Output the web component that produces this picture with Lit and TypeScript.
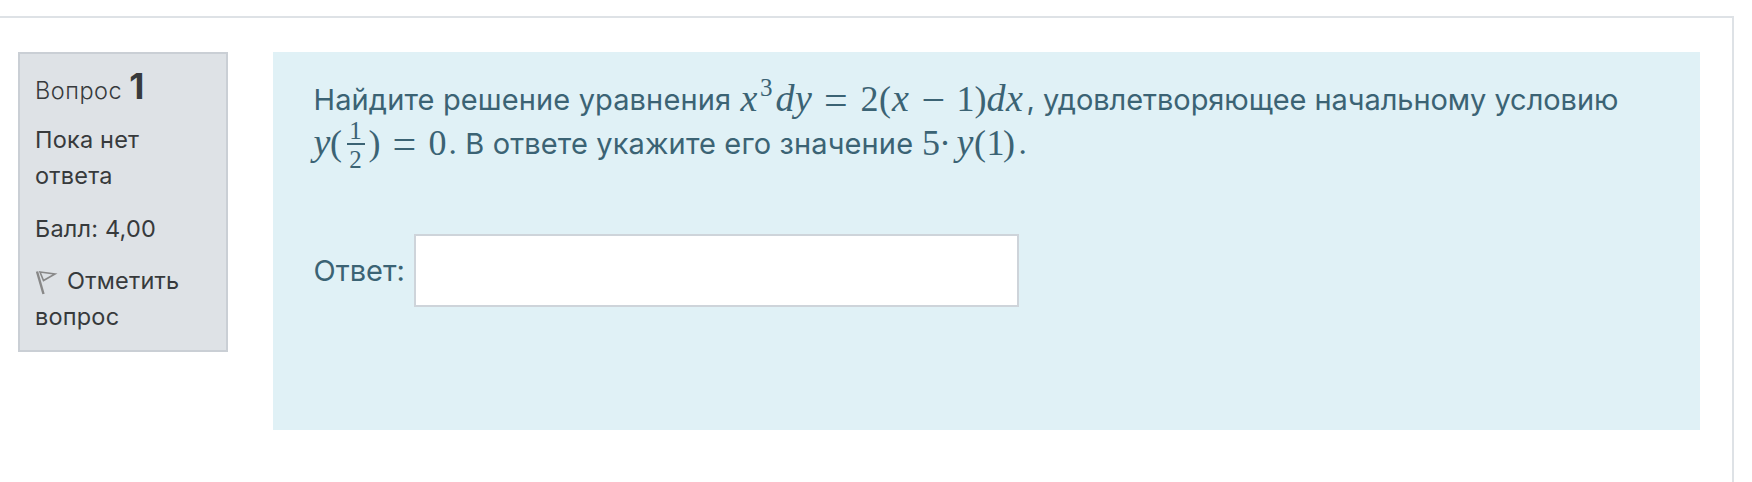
import { LitElement, html, css } from "lit";
import { customElement, property } from "lit/decorators.js";
import { styleMap } from "lit/directives/style-map.js";

type Kind = "i" | "n" | "op" | "sup" | "frac";
type Token = [text: string, kind: Kind, advance: number];

const EQUATION: Token[] = [
  ["x", "i", 19.5],
  ["3", "sup", 15.5],
  ["d", "i", 19.5],
  ["y", "i", 29],
  ["=", "op", 36.5],
  ["2", "n", 18.5],
  ["(", "n", 13],
  ["x", "i", 29.5],
  ["−", "op", 35],
  ["1", "n", 18],
  [")", "n", 12],
  ["d", "i", 19.5],
  ["x", "i", 20.5],
];

const CONDITION: Token[] = [
  ["y", "i", 16.5],
  ["(", "n", 16.5],
  ["1/2", "frac", 22],
  [")", "n", 24],
  ["=", "op", 36],
  ["0", "n", 20],
];

const VALUE: Token[] = [
  ["5", "n", 17],
  ["·", "n", 17.5],
  ["y", "i", 17.5],
  ["(", "n", 12.5],
  ["1", "n", 16.5],
  [")", "n", 15.5],
];

@customElement("math-run")
class MathRun extends LitElement {
  @property({ attribute: false }) tokens: Token[] = [];

  static styles = css`
    :host {
      display: inline;
      font-family: "Liberation Serif", serif;
      font-size: 36px;
      line-height: 1px;
      letter-spacing: 0;
    }
    .t { display: inline-block; text-align: left; vertical-align: -1px; }
    .i { font-style: italic; font-size: 38px; }
    .op { font-size: 42px; vertical-align: -4px; }
    .sup { font-size: 25px; vertical-align: 14px; }
    .frac {
      display: inline-flex;
      flex-direction: column;
      font-size: 25px;
      vertical-align: 15px;
      margin: -14px 0 -14px;
    }
    .frac span { width: 18px; line-height: 24px; text-align: center; }
    .frac span + span { border-top: 2px solid; padding-top: 3px; }
  `;

  render() {
    return this.tokens.map(([text, kind, advance]) => {
      const width = styleMap({ width: `${advance}px` });
      if (kind === "frac") {
        const parts = text.split("/");
        return html`<span class="t frac" style=${width}>${parts.map((p) => html`<span>${p}</span>`)}</span>`;
      }
      return html`<span class="t ${kind}" style=${width}>${text}</span>`;
    });
  }
}

@customElement("question-info")
class QuestionInfo extends LitElement {
  static styles = css`
    :host {
      display: block;
      box-sizing: border-box;
      width: 210px;
      height: 300px;
      padding: 13px 15px;
      border: 2px solid #cacfd5;
      background: #dee2e6;
      color: #373a3c;
      font: 23.5px/36px Inter, sans-serif;
      letter-spacing: 0.2px;
      white-space: nowrap;
    }
    .number {
      box-sizing: border-box;
      height: 55px;
      margin: 0;
      padding-top: 1px;
      font-size: 23.5px;
      font-weight: 300;
      letter-spacing: 0.5px;
    }
    .number b { font-size: 35px; font-weight: 700; line-height: 36px; }
    .row { margin-bottom: 16px; }
    .row:nth-of-type(1) { margin-bottom: 17px; }
    .flag {
      display: inline-block;
      width: 24px;
      height: 26px;
      margin-right: 8px;
      vertical-align: -7px;
    }
  `;

  render() {
    return html`
      <h3 class="number">Вопрос <b>1</b></h3>
      <div class="row">Пока нет<br />ответа</div>
      <div class="row">Балл: 4,00</div>
      <div class="row">
        <svg class="flag" viewBox="0 0 24 26" fill="none" stroke="#888888">
          <path d="M2 1.500L8.500 24" stroke-width="2.400" />
          <path d="M5 2L20 4L8.500 10.500Z" stroke-width="1.600" />
        </svg>Отметить<br />вопрос
      </div>
    `;
  }
}

@customElement("app-root")
class AppRoot extends LitElement {
  static styles = css`
    :host {
      display: flow-root;
      height: 482px;
      overflow: hidden;
      background: #fff;
    }
    .frame {
      box-sizing: border-box;
      display: flex;
      justify-content: space-between;
      align-items: flex-start;
      width: 1734px;
      height: 466px;
      margin-top: 16px;
      padding: 34px 32px 0 18px;
      border: 2px solid #dee2e6;
      border-left: 0;
      border-bottom: 0;
    }
    .content {
      box-sizing: border-box;
      width: 1427px;
      height: 378px;
      padding: 26px 40px 0 40.5px;
      background: #e0f1f6;
      color: #3b6374;
      font: 29px/44px Inter, sans-serif;
      white-space: nowrap;
    }
    .line { height: 44px; }
    .lead { display: inline-block; width: 427px; letter-spacing: 0.12px; }
    .middle { display: inline-block; width: 473.5px; letter-spacing: 0.13px; }
    .tail { letter-spacing: -0.06px; }
    .answer { display: flex; align-items: center; margin-top: 68px; }
    input {
      box-sizing: border-box;
      width: 605px;
      height: 73px;
      margin: 0 0 0 9px;
      border: 2px solid #ced4da;
      border-radius: 0;
      background: #fff;
    }
  `;

  render() {
    return html`
      <main class="frame">
        <question-info></question-info>
        <section class="content">
          <div class="line"><span class="lead">Найдите решение уравнения</span><math-run .tokens=${EQUATION}></math-run><span class="tail">, удовлетворяющее начальному условию</span></div>
          <div class="line"><math-run .tokens=${CONDITION}></math-run><span class="middle">. В ответе укажите его значение</span><math-run .tokens=${VALUE}></math-run>.</div>
          <label class="answer">Ответ:<input type="text" /></label>
        </section>
      </main>
    `;
  }
}
